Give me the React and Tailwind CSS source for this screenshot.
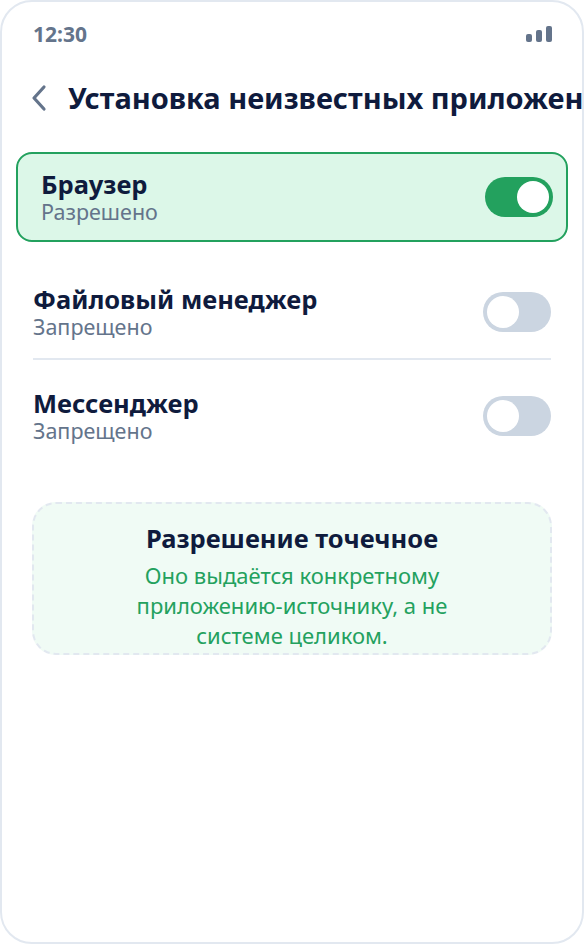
const apps = [
  { name: "Браузер", status: "Разрешено", on: true },
  { name: "Файловый менеджер", status: "Запрещено", on: false },
  { name: "Мессенджер", status: "Запрещено", on: false },
]

function Toggle({ on }) {
  return (
    <div
      className={
        on
          ? "w-[68px] h-[40px] rounded-full bg-[#23a15e] p-[4px] flex justify-end shrink-0"
          : "w-[68px] h-[40px] rounded-full bg-[#cbd5e1] p-[4px] flex justify-start shrink-0"
      }
    >
      <div className="w-[32px] h-[32px] rounded-full bg-white"></div>
    </div>
  )
}

function SignalIcon() {
  return (
    <div className="flex items-end gap-[4px] h-[16px]">
      <div className="w-[6px] h-[8px] rounded-[2px] bg-[#64748b]"></div>
      <div className="w-[6px] h-[12px] rounded-[2px] bg-[#64748b]"></div>
      <div className="w-[6px] h-[16px] rounded-[2px] bg-[#64748b]"></div>
    </div>
  )
}

export default function App() {
  return (
    <div
      className="w-[584px] h-[944px] bg-white border-2 border-[#e2e8f0] rounded-[32px] overflow-hidden"
      style={{ fontFamily: '"Noto Sans", "Open Sans", sans-serif' }}
    >
      {/* статус-бар */}
      <div className="flex justify-between items-center pl-[31px] pr-[30px] pt-[19px] h-[45px]">
        <span className="text-[21px] leading-[24px] font-bold text-[#64748b]">12:30</span>
        <SignalIcon />
      </div>

      {/* заголовок */}
      <div className="flex items-center mt-[31px] h-[40px] pl-[28px] gap-[20px] whitespace-nowrap">
        <svg width="18" height="28" viewBox="0 0 18 28" className="shrink-0">
          <path d="M14 3 L4 14 L14 25" fill="none" stroke="#64748b" strokeWidth="3.2" strokeLinecap="round" strokeLinejoin="round" />
        </svg>
        <h1 className="text-[29px] leading-[40px] font-bold text-[#0f1b3d]">Установка неизвестных приложений</h1>
      </div>

      {/* список */}
      <div className="mt-[34px] px-[14px]">
        <div className="flex items-center justify-between border-2 border-[#23a15e] bg-[#dcf7e8] rounded-[16px] pl-[23px] pr-[13px] py-[15px]">
          <div>
            <div className="text-[25.5px] leading-[30px] font-bold text-[#0f1b3d]">{apps[0].name}</div>
            <div className="text-[21.5px] leading-[26px] text-[#64748b]">{apps[0].status}</div>
          </div>
          <Toggle on={apps[0].on} />
        </div>

        <div className="mx-[17px]">
          <div className="flex items-center justify-between pt-[42px] pb-[18px] border-b-2 border-[#e2e8f0]">
            <div>
              <div className="text-[25.5px] leading-[30px] font-bold text-[#0f1b3d]">{apps[1].name}</div>
              <div className="text-[21.5px] leading-[26px] text-[#64748b]">{apps[1].status}</div>
            </div>
            <Toggle on={apps[1].on} />
          </div>
          <div className="flex items-center justify-between pt-[28px]">
            <div>
              <div className="text-[25.5px] leading-[30px] font-bold text-[#0f1b3d]">{apps[2].name}</div>
              <div className="text-[21.5px] leading-[26px] text-[#64748b]">{apps[2].status}</div>
            </div>
            <Toggle on={apps[2].on} />
          </div>
        </div>
      </div>

      {/* подсказка */}
      <div className="mx-[30px] mt-[58px] border-2 border-dashed border-[#e2e8f0] bg-[#f0fbf5] rounded-[24px] pt-[20px] pb-[3px] text-center">
        <div className="text-[25.5px] leading-[28px] font-bold text-[#0f1b3d]">Разрешение точечное</div>
        <p className="mt-[8px] mx-auto max-w-[340px] text-[22px] leading-[30px] text-[#23a15e]">
          Оно выдаётся конкретному приложению-источнику, а не системе целиком.
        </p>
      </div>
    </div>
  )
}
